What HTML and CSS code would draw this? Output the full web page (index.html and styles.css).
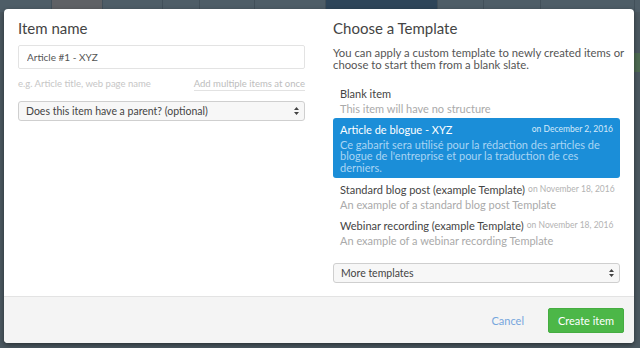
FILE: index.html
```html
<!DOCTYPE html>
<html lang="en">
<head>
    <meta charset="UTF-8">
    <meta name="viewport" content="width=device-width, initial-scale=1.0">
    <title>New Item</title>
    <link rel="stylesheet" href="styles.css">
</head>
<body>
    <div class="app">
        <div class="app-bar">
            <div class="cell" style="width: 52px"></div>
            <div class="cell cell-muted" style="width: 51px"></div>
            <div class="cell" style="width: 60px"></div>
            <div class="cell" style="width: 37px"></div>
            <div class="cell" style="width: 55px"></div>
            <div class="cell" style="width: 71px"></div>
            <div class="cell cell-active" style="width: 112px"></div>
            <div class="cell" style="width: 46px"></div>
            <div class="cell" style="width: 57px"></div>
            <div class="cell" style="width: 94px"></div>
            <div class="cell"></div>
        </div>
        <div class="app-tag"></div>
    </div>

    <div class="modal">
        <div class="modal-body">
            <div class="column">
                <h2>Item name</h2>
                <input type="text" class="text-input" value="Article #1 - XYZ">
                <div class="hint-row">
                    <span class="hint">e.g. Article title, web page name</span>
                    <a href="#" class="hint-link">Add multiple items at once</a>
                </div>
                <div class="select">
                    <span>Does this item have a parent? (optional)</span>
                    <svg class="select-arrows" width="5" height="8" viewBox="0 0 5 8"><path d="M2.5 0 L5 3 H0 Z M2.5 8 L5 5 H0 Z" fill="#444"/></svg>
                </div>
            </div>

            <div class="column">
                <h2>Choose a Template</h2>
                <p class="intro">You can apply a custom template to newly created items or choose to start them from a blank slate.</p>
                <ul class="templates">
                    <li class="template">
                        <div class="template-head"><span class="template-name">Blank item</span></div>
                        <div class="template-desc">This item will have no structure</div>
                    </li>
                    <li class="template selected">
                        <div class="template-head">
                            <span class="template-name">Article de blogue - XYZ</span>
                            <span class="template-date">on December 2, 2016</span>
                        </div>
                        <div class="template-desc">Ce gabarit sera utilisé pour la rédaction des articles de blogue de l'entreprise et pour la traduction de ces derniers.</div>
                    </li>
                    <li class="template">
                        <div class="template-head">
                            <span class="template-name">Standard blog post (example Template)</span>
                            <span class="template-date">on November 18, 2016</span>
                        </div>
                        <div class="template-desc">An example of a standard blog post Template</div>
                    </li>
                    <li class="template">
                        <div class="template-head">
                            <span class="template-name">Webinar recording (example Template)</span>
                            <span class="template-date">on November 18, 2016</span>
                        </div>
                        <div class="template-desc">An example of a webinar recording Template</div>
                    </li>
                </ul>
                <div class="select select-more">
                    <span>More templates</span>
                    <svg class="select-arrows" width="5" height="8" viewBox="0 0 5 8"><path d="M2.5 0 L5 3 H0 Z M2.5 8 L5 5 H0 Z" fill="#444"/></svg>
                </div>
            </div>
        </div>
        <div class="modal-footer">
            <a href="#" class="cancel">Cancel</a>
            <button type="button" class="btn-create">Create item</button>
        </div>
    </div>
</body>
</html>
```

FILE: styles.css
```css
* { box-sizing: border-box; }
body { margin: 0; width: 640px; height: 348px; overflow: hidden; position: relative; background: #4b5860; font-family: Lato, "Open Sans", sans-serif; }

.app { height: 100%; }
.app-bar { display: flex; height: 12px; background: #4e5d67; }
.app-bar .cell { border-right: 1px solid #42505a; flex-shrink: 0; }
.app-bar .cell:last-child { flex: 1; border-right: none; }
.app-bar .cell-muted { background: #5f6165; }
.app-bar .cell-active { background: #2e4559; }
.app-tag { position: absolute; right: 0; top: 53px; width: 6px; height: 19px; background: #4d6a52; }

.modal { position: absolute; left: 4px; top: 9px; width: 630px; height: 334px; background: #fff; border-radius: 4px; box-shadow: 0 2px 5px rgba(0, 0, 0, 0.45); display: flex; flex-direction: column; overflow: hidden; }
.modal-body { flex: 1; min-height: 0; overflow: hidden; display: grid; grid-template-columns: 287px 287px; column-gap: 28px; padding: 10px 14px 0; }

h2 { margin: 0; font-size: 15px; line-height: 18px; font-weight: 400; color: #444; }

.text-input { display: block; width: 100%; height: 24px; margin-top: 8px; padding: 0 8px; border: 1px solid #e3e3e3; border-radius: 2px; font-family: inherit; font-size: 10px; color: #555; outline: none; }
.hint-row { display: flex; justify-content: space-between; margin-top: 9px; line-height: 12px; font-size: 9.5px; }
.hint { color: #c6c6c6; }
.hint-link { color: #bdbdbd; text-decoration: none; border-bottom: 1px solid #e2e2e2; }

.select { display: flex; align-items: center; justify-content: space-between; height: 20px; margin-top: 10px; padding: 0 5px 0 7px; background: #f7f7f7; border: 1px solid #cfcfcf; border-radius: 3px; font-size: 10.5px; color: #444; }
.select-more { margin-top: 14px; }

.intro { margin: 10px -8px 0 0; font-size: 11.3px; line-height: 11.5px; color: #555; }

.templates { list-style: none; margin: 12px 0 0; padding: 0; }
.template { padding: 5px 7px 3px; border-radius: 3px; }
.template-head { display: flex; justify-content: space-between; align-items: center; gap: 3px; height: 13px; line-height: 13px; white-space: nowrap; }
.template-name { font-size: 11px; color: #444; }
.template-date { font-size: 8.5px; color: #b3b3b3; }
.template-desc { margin-top: 3px; font-size: 11px; line-height: 11.5px; color: #aaa; }
.template.selected { background: #1b8ed8; padding-bottom: 5px; }
.template.selected .template-name { color: #fff; }
.template.selected .template-date { color: #d5eafa; }
.template.selected .template-desc { color: #a9d5f4; }

.modal-footer { height: 47px; flex-shrink: 0; display: flex; align-items: center; justify-content: flex-end; gap: 24px; padding: 0 10px; background: #f4f4f4; border-top: 1px solid #e3e3e3; }
.cancel { font-size: 11px; color: #76a6dd; text-decoration: none; }
.btn-create { width: 76px; height: 25px; border: 1px solid #45ad41; border-radius: 2px; background: #4cb748; color: #fff; font-family: inherit; font-size: 11px; padding: 0; }
```
